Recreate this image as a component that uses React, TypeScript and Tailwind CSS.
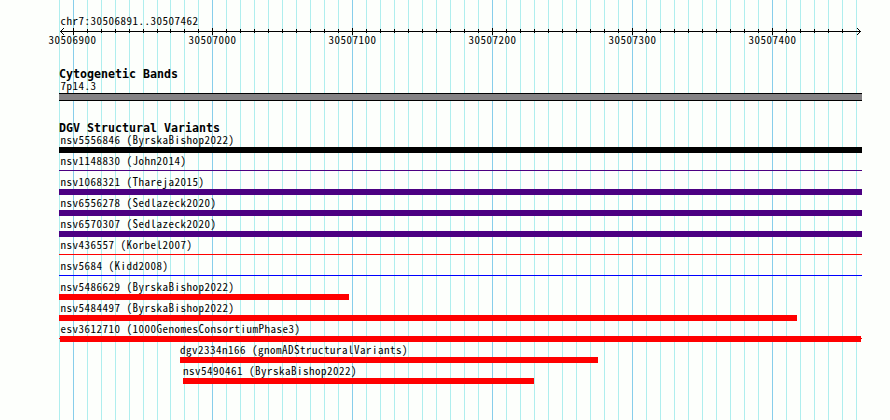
import clsx from 'clsx';

// --- Scale -------------------------------
const WIDTH = 890;
const HEIGHT = 420;
const LEFT = 59; // first pixel of the panel
const STEP = 14; // 10 bp

const LABEL = "font-['Noto_Sans_CJK_JP',monospace] text-[11px] tracking-[0.5px] leading-[10px] whitespace-pre text-black [font-feature-settings:'hwid']";
const HEADING = "font-['DejaVu_Sans_Mono',monospace] font-bold text-[11.63px] leading-[12px] whitespace-pre text-black";

const GRID = Array.from({ length: 58 }, (_, i) => {
    const k = i - 1;
    return { x: 73 + k * STEP - (k >= 7 ? 1 : 0), major: k % 10 === 0 };
});

const POSITIONS = ['30506900', '30507000', '30507100', '30507200', '30507300', '30507400'];

interface Variant {
    name: string;
    color: string;
    start: number;
    end: number;
    thin?: boolean;
    whisker?: boolean;
    labelX?: number;
}

const VARIANTS: Variant[] = [
    { name: 'nsv5556846 (ByrskaBishop2022)', color: 'bg-black', start: 59, end: 862 },
    { name: 'nsv1148830 (John2014)', color: 'bg-[#4b0082]', start: 59, end: 862, thin: true },
    { name: 'nsv1068321 (Thareja2015)', color: 'bg-[#4b0082]', start: 59, end: 862 },
    { name: 'nsv6556278 (Sedlazeck2020)', color: 'bg-[#4b0082]', start: 59, end: 862 },
    { name: 'nsv6570307 (Sedlazeck2020)', color: 'bg-[#4b0082]', start: 59, end: 862 },
    { name: 'nsv436557 (Korbel2007)', color: 'bg-[#ff0000]', start: 59, end: 862, thin: true },
    { name: 'nsv5684 (Kidd2008)', color: 'bg-[#0000ff]', start: 59, end: 862, thin: true },
    { name: 'nsv5486629 (ByrskaBishop2022)', color: 'bg-[#ff0000]', start: 59, end: 349 },
    { name: 'nsv5484497 (ByrskaBishop2022)', color: 'bg-[#ff0000]', start: 59, end: 797 },
    { name: 'esv3612710 (1000GenomesConsortiumPhase3)', color: 'bg-[#ff0000]', start: 60, end: 861, whisker: true },
    { name: 'dgv2334n166 (gnomADStructuralVariants)', color: 'bg-[#ff0000]', start: 180, end: 598, labelX: 180 },
    { name: 'nsv5490461 (ByrskaBishop2022)', color: 'bg-[#ff0000]', start: 183, end: 534, labelX: 183 },
];

function GridLines() {
    return (
        <svg className="absolute inset-0" width={WIDTH} height={HEIGHT} shapeRendering="crispEdges">
            {GRID.map(({ x, major }) => (
                <rect key={x} x={x} y={0} width={1} height={HEIGHT} fill={major ? '#87ceeb' : '#afeeee'} />
            ))}
        </svg>
    );
}

// --- Ruler with arrows and ticks ---------
function Ruler() {
    return (
        <svg className="block" width={WIDTH} height={8} shapeRendering="crispEdges">
            <rect x={60} y={3} width={801} height={1} />
            {[1, 2, 3].map((n) => (
                <g key={n}>
                    <rect x={60 + n} y={3 - n} width={1} height={1} />
                    <rect x={60 + n} y={3 + n} width={1} height={1} />
                    <rect x={860 - n} y={3 - n} width={1} height={1} />
                    <rect x={860 - n} y={3 + n} width={1} height={1} />
                </g>
            ))}
            {GRID.slice(1, -1).map(({ x, major }) => (
                <rect key={x} x={x} y={major ? 0 : 1} width={1} height={major ? 7 : 4} />
            ))}
        </svg>
    );
}

function VariantRow({ name, color, start, end, thin, whisker, labelX = 60.5 }: Variant) {
    return (
        <div className="relative h-[21px]">
            <div className={clsx(LABEL, 'h-3')} style={{ paddingLeft: labelX }}>{name}</div>
            <div
                className={clsx(color, thin ? 'mt-[3px] h-px' : 'mt-px h-1.5')}
                style={{ marginLeft: start, width: end - start }}
            />
            {whisker && <div className={clsx('absolute top-[15px] h-px', color)} style={{ left: LEFT, width: 803 }} />}
        </div>
    );
}

export default function App() {
    return (
        <div className="relative h-[420px] w-[890px] overflow-hidden bg-[#fdfffc]">
            <GridLines />
            <div className="relative pt-[15px]">
                <div className={clsx(LABEL, 'h-[13px] pl-[60.5px]')}>chr7:30506891..30507462</div>
                <Ruler />
                <div className="-mt-0.5 flex h-[34px] gap-[92px] pl-[48.5px]">
                    {POSITIONS.map((p) => (
                        <div key={p} className={clsx(LABEL, 'w-12')}>{p}</div>
                    ))}
                </div>

                <div className={clsx(HEADING, 'pl-[59px]')}>Cytogenetic Bands</div>
                <div className={clsx(LABEL, 'h-[13px] pl-[60.5px]')}>7p14.3</div>
                <div className="ml-[59px] h-2 w-[803px] border-y border-black bg-[#848284]" />

                <div className={clsx(HEADING, 'mt-[21px] h-3 pl-[59px]')}>DGV Structural Variants</div>
                {VARIANTS.map((v) => (
                    <VariantRow key={v.name} {...v} />
                ))}
            </div>
        </div>
    );
}
